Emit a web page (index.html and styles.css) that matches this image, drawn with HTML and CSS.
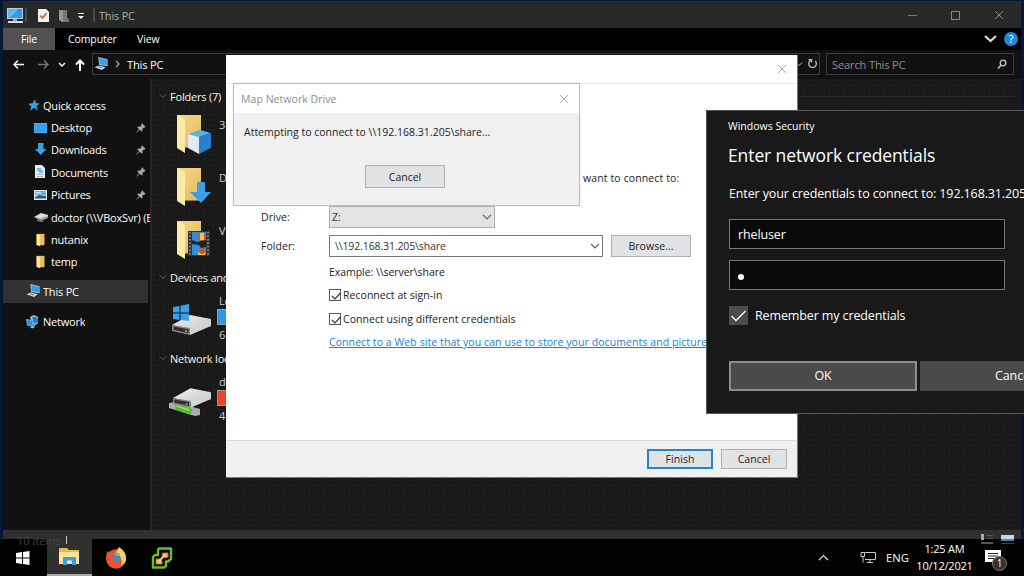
FILE: index.html
```html
<!DOCTYPE html>
<html lang="en">
<head>
<meta charset="utf-8">
<title>This PC</title>
<link rel="stylesheet" href="styles.css">
</head>
<body>
<svg class="defs" width="0" height="0">
  <defs>
    <linearGradient id="gf" x1="0" y1="0" x2="1" y2="1"><stop offset="0" stop-color="#f6d98a"/><stop offset="1" stop-color="#e3b95c"/></linearGradient>
    <linearGradient id="gd" x1="0" y1="0" x2="1" y2="1"><stop offset="0" stop-color="#f4f4f4"/><stop offset="1" stop-color="#c4c4c4"/></linearGradient>
    <symbol id="pin" viewBox="0 0 10 10"><path fill="#a8a8a8" d="M6 0.3 9.7 4 8.7 4.6 8 4.4 6.4 6 6.4 8 5.6 8.6 3.6 6.8 0.8 9.6 0.3 9.2 3 6.2 1.4 4.4 2 3.6 4 3.7 5.6 2 5.4 1.2Z"/></symbol>
    <symbol id="folder" viewBox="0 0 34 40"><path fill="url(#gf)" d="M0 1H24V33H0Z"/><path fill="#b58a3c" d="M7 33H24V33.8H7Z"/><path fill="#ffe9a8" d="M0 1 8 5V39L0 34Z"/></symbol>
    <symbol id="drive" viewBox="0 0 40 22"><path fill="url(#gd)" d="M0 11 18 1 39 5V8L18 15Z"/><path fill="#d4d4d4" d="M18 14 39 6V12L18 21Z"/><path fill="#888" d="M0 11 18 14V21L0 17Z"/><path fill="#2d2d2d" d="M1.500 12.500 16.500 15.200V19.200L1.500 15.800Z"/><path fill="#6be04b" d="M13 16.500h2v1.500h-2z"/></symbol>
    <symbol id="mini" viewBox="0 0 12 16"><path fill="#e6be62" d="M1 1H10V14H1Z"/><path fill="#ffe79c" d="M1 1 5 2.500V15L1 13.500Z"/></symbol>
    <symbol id="pc" viewBox="0 0 15 15"><path fill="#bfc7cd" d="M4 0 14 2.500V10L5 8.500Z"/><path fill="#35a0ea" d="M5 1 13.500 3V9L5.500 7.800Z"/><path fill="#d4dadf" d="M0 11 5 9 12 11 8 14Z"/><path fill="#87929a" d="M3 11 6 10 9 11.200 7 12.300Z"/></symbol>
    <symbol id="close" viewBox="0 0 10 10"><path d="M1 1 9 9M9 1 1 9" fill="none" stroke="currentColor"/></symbol>
    <symbol id="down" viewBox="0 0 10 6"><path d="M1 1 5 5 9 1" fill="none" stroke="currentColor" stroke-width="1.200"/></symbol>
    <symbol id="tick" viewBox="0 0 12 12"><path d="M2 6 5 9 10.500 3" fill="none" stroke="currentColor" stroke-width="1.200"/></symbol>
  </defs>
</svg>
<div class="desktop">

  <main class="window explorer">
    <header class="titlebar">
      <svg class="tb-pc" width="18" height="15" viewBox="0 0 18 15"><path fill="#bcd" d="M0 0H16V11H0Z"/><path fill="#2f9be6" d="M1 1H15V10H1Z"/><path fill="#5bb8f5" d="M1 1H11L3 10H1Z"/><path fill="#9aa7b0" d="M6 11H10V13H6Z"/><path fill="#d5dde2" d="M1 13H16V15H1Z"/></svg>
      <i class="rule"></i>
      <svg class="tb-check" width="11" height="13" viewBox="0 0 11 13"><path fill="#f4f4f4" d="M0 0H8L11 3V13H0Z"/><path d="M2 6.500 4.500 9 8.500 4" fill="none" stroke="#e0592b" stroke-width="1.700"/></svg>
      <svg class="tb-folder" width="10" height="13" viewBox="0 0 10 13"><path fill="#777" d="M1 1H8V9L10 10V13H2Z"/><path fill="#999" d="M0 1 4 2V13L0 11Z"/></svg>
      <svg class="tb-menu" width="8" height="7" viewBox="0 0 8 7"><path fill="#eee" d="M1 0H7V1H1ZM1 3H7L4 6Z"/></svg>
      <i class="rule rule2"></i>
      <span class="tb-title">This PC</span>
      <div class="controls">
        <svg width="9" height="10" viewBox="0 0 9 10"><path d="M0 5.500H9" stroke="#777"/></svg>
        <svg width="9" height="10" viewBox="0 0 9 10"><path d="M.5 1.500H8.500V9.500H.5Z" fill="none" stroke="#888"/></svg>
        <svg width="10" height="10"><use href="#close"/></svg>
      </div>
    </header>
    <nav class="ribbon">
      <span class="file">File</span><span class="tab computer">Computer</span><span class="tab view">View</span>
      <svg class="expand" width="13" height="8" viewBox="0 0 13 8"><path d="M1 1 6.500 6 12 1" fill="none" stroke="#ddd" stroke-width="2.200"/></svg>
      <span class="help">?</span>
    </nav>
    <div class="address">
      <svg class="arrows" width="78" height="14" viewBox="0 0 78 14" fill="none" stroke="#fff" stroke-width="1.400"><path d="M12 6.500H2M6 2.500 2 6.500 6 10.500"/><path stroke="#777" d="M26 6.500H36M32 2.500 36 6.500 32 10.500"/><path d="M47 5 50 8 53 5"/><path stroke-width="2" d="M68 13V3M64 6.500 68 2.500 72 6.500"/></svg>
      <div class="path">
        <svg width="15" height="14"><use href="#pc"/></svg>
        <svg class="crumb" width="5" height="8" viewBox="0 0 5 8"><path d="M1 1 4 4 1 7" fill="none" stroke="#aaa" stroke-width="1.200"/></svg>
        <span>This PC</span>
        <svg class="pd" width="8" height="6" viewBox="0 0 10 6"><use href="#down"/></svg>
        <svg class="reload" width="11" height="12" viewBox="0 0 11 12"><path d="M8.300 3A3.800 3.800 0 1 1 3 2.800" fill="none" stroke="#bbb" stroke-width="1.400"/><path fill="#bbb" d="M1 1H5.200V5.200L4 4Z"/></svg>
      </div>
      <div class="search"><span>Search This PC</span><svg width="10" height="11" viewBox="0 0 10 11"><circle cx="6" cy="4" r="2.800" fill="none" stroke="#ccc" stroke-width="1.300"/><path d="M4 6.300 1 9.500" stroke="#ccc" stroke-width="1.500"/></svg></div>
    </div>
    <div class="content">
      <aside class="nav">
        <div class="item root"><svg width="12" height="12" viewBox="0 0 12 12"><path fill="#379fe8" d="M7 0 7.800 4 12 4.500 8.500 7 10 11.500 6 8.800 2 12 3.300 7.500 0 4.800 4.500 4.300Z"/></svg><span>Quick access</span></div>
        <div class="item"><svg width="14" height="12" viewBox="0 0 14 12"><path fill="#5cb3ee" d="M0 1H13V11H0Z"/><path fill="#35a0ea" d="M.7 1.700H12.500V10.300H.7Z"/></svg><span>Desktop</span><svg class="pin" width="10" height="10"><use href="#pin"/></svg></div>
        <div class="item"><svg width="14" height="13" viewBox="0 0 14 13"><path fill="#3c9fe6" d="M4 0H9.500V6H12.500L6.700 12 1 6H4Z"/></svg><span>Downloads</span><svg class="pin" width="10" height="10"><use href="#pin"/></svg></div>
        <div class="item"><svg width="14" height="14" viewBox="0 0 14 14"><path fill="#e8edf0" d="M1 0H8L11 3V13H1Z"/><path fill="#6db8e8" d="M3 3H7V6H3ZM5 5h4v3H5z"/><path fill="#a8b4bc" d="M3 9H9V10H3ZM3 11H9V12H3Z"/></svg><span>Documents</span><svg class="pin" width="10" height="10"><use href="#pin"/></svg></div>
        <div class="item"><svg width="14" height="12" viewBox="0 0 14 12"><path fill="#e4e9ec" d="M0 1H13V11H0Z"/><path fill="#65b5e8" d="M1 2H12V6H1Z"/><path fill="#c9e5f5" d="M2 3H7V4.500H2Z"/><path fill="#3c5666" d="M1 8 5 6 12 7V9.500H1Z"/></svg><span>Pictures</span><svg class="pin" width="10" height="10"><use href="#pin"/></svg></div>
        <div class="item"><svg width="14" height="11" viewBox="0 0 14 11"><path fill="#ddd" d="M0 5 7 1 14 3V5L7 8Z"/><path fill="#999" d="M0 5 7 6.500 14 4V6L7 9Z"/><path fill="#6bbd45" d="M3 8 9 9V10L3 9Z"/></svg><span>doctor (\\VBoxSvr) (E:)</span></div>
        <div class="item"><svg width="14" height="14"><use href="#mini"/></svg><span>nutanix</span></div>
        <div class="item"><svg width="14" height="14"><use href="#mini"/></svg><span>temp</span></div>
        <div class="item root selected"><svg width="15" height="14"><use href="#pc"/></svg><span>This PC</span></div>
        <div class="item root network"><svg width="15" height="14" viewBox="0 0 15 14"><path fill="#a9d4ee" d="M4 2 8 0 12 2V8L8 11Z"/><path fill="#1e7fc8" d="M6 2 10 1.500 12 4V7L8 9.500Z"/><path fill="#64b7ed" d="M0 4 7 5V12L1 10.500Z"/><path fill="#2894e0" d="M1 5 6.300 6V11L1.500 9.800Z"/><path fill="#b9c5cd" d="M4 12 8 11 9 12 6 13.500Z"/></svg><span>Network</span></div>
      </aside>
      <section class="files">
        <h2 class="group g1"><svg width="8" height="6"><use href="#down"/></svg><span>Folders (7)</span></h2>
        <div class="tile"><svg width="36" height="42" viewBox="0 0 36 42"><use href="#folder" width="34" height="40"/><path fill="#dfeaf2" d="M11 20 22 23V40L11 34Z"/><path fill="#55b2f0" d="M11 20 23 16 34 19 22 23Z"/><path fill="#2680d0" d="M22 23 34 19V34L22 40Z"/></svg><span>3D</span></div>
        <div class="tile"><svg width="36" height="42" viewBox="0 0 36 42"><use href="#folder" width="34" height="40"/><path fill="#3c9fe6" d="M20 15H28V25H34L24 36 13 25H20Z"/></svg><span>D</span></div>
        <div class="tile"><svg width="36" height="42" viewBox="0 0 36 42"><use href="#folder" width="34" height="40"/><path fill="#333" d="M11 11H33V36H11Z"/><path fill="#318fd8" d="M15 12H29V22H15ZM15 24H29V35H15Z"/><path d="M13 12V35M31 12V35" stroke="#999" stroke-width="1.500" stroke-dasharray="1.500 2"/><circle cx="25" cy="17" r="4" fill="#d94f2d"/><path fill="#efc44d" d="M23 13H27V20H23ZM21 32H28V35H21Z"/><path fill="#222" d="M15 20 20 22 29 20V27L24 28 22 25 15 24Z"/><circle cx="25" cy="31" r="3" fill="#c85632"/></svg><span>V</span></div>
        <h2 class="group g2"><svg width="8" height="6"><use href="#down"/></svg><span>Devices and</span></h2>
        <div class="disk"><svg width="42" height="36" viewBox="0 0 42 36"><use href="#drive" x="1" y="11" width="40" height="22"/><path fill="#36a2ea" d="M2 4 8.500 3V9.500H2ZM9.500 2.800 18 1V9.500H9.500ZM2 10.500H8.500V17L2 16ZM9.500 10.500H18V18L9.500 17Z"/></svg><div class="info"><span>Lo</span><i class="bar"></i><span>61</span></div></div>
        <h2 class="group g3"><svg width="8" height="6"><use href="#down"/></svg><span>Network loc</span></h2>
        <div class="disk net"><svg width="44" height="36" viewBox="0 0 44 36"><path fill="#a9adaf" d="M0 19 6 18 31 25 31 31 26 32 0 24Z"/><path fill="#5cb832" d="M6 20 23 25 22 31 7 26Z"/><path fill="#8de05c" d="M7 21 20 25V27L8 23Z"/><use href="#drive" x="4" y="3" width="39" height="22"/></svg><div class="info"><span>do</span><i class="bar full"></i><span>4</span></div></div>
      </section>
      <div class="rest"></div>
    </div>
    <footer class="status"></footer>
  </main>

  <section class="window wizard">
    <header class="w-title"><svg width="10" height="10"><use href="#close"/></svg></header>
    <div class="w-body">
      <p class="w-intro">want to connect to:</p>
      <div class="field drive"><label>Drive:</label><div class="select"><span>Z:</span><svg width="10" height="6"><use href="#down"/></svg></div></div>
      <div class="field folder"><label>Folder:</label><div class="combo"><span>\\192.168.31.205\share</span><svg width="10" height="6"><use href="#down"/></svg></div><span class="btn browse">Browse...</span></div>
      <p class="example">Example: \\server\share</p>
      <div class="check"><i><svg width="12" height="12"><use href="#tick"/></svg></i><span>Reconnect at sign-in</span></div>
      <div class="check second"><i><svg width="12" height="12"><use href="#tick"/></svg></i><span>Connect using different credentials</span></div>
      <p class="link">Connect to a Web site that you can use to store your documents and pictures</p>
    </div>
    <footer class="w-foot"><span class="btn primary">Finish</span><span class="btn">Cancel</span></footer>
  </section>

  <section class="window popup">
    <header><span>Map Network Drive</span><svg width="10" height="10"><use href="#close"/></svg></header>
    <div class="p-body"><p>Attempting to connect to \\192.168.31.205\share...</p><span class="btn">Cancel</span></div>
  </section>

  <section class="window security">
    <p class="s-app">Windows Security</p>
    <h1>Enter network credentials</h1>
    <p class="s-text">Enter your credentials to connect to: 192.168.31.205</p>
    <div class="input">rheluser</div>
    <div class="input pass"><i></i></div>
    <div class="remember"><i><svg width="19" height="19" viewBox="0 0 19 19"><path d="M2.500 10 7 14.500 16.500 5" fill="none" stroke="#fff" stroke-width="1.300"/></svg></i><span>Remember my credentials</span></div>
    <div class="s-buttons"><span class="ok">OK</span><span class="cancel">Cancel</span></div>
  </section>

  <footer class="window taskbar">
    <div class="start"><svg width="14" height="14" viewBox="0 0 14 14"><path fill="#fff" d="M0 2 6 1V6.500H0ZM7 1 13.500 0V6.500H7ZM0 7.500H6V13L0 12ZM7 7.500H13.500V14L7 13Z"/></svg></div>
    <div class="task active"><svg width="21" height="18" viewBox="0 0 21 18"><path fill="#e8b84b" d="M0 0H8L10 2H20V6H0Z"/><path fill="#ffe49a" d="M0 4H20V16H0Z"/><path fill="#379fe8" d="M4 9H17V17H13V12.500H8V17H4Z"/></svg></div>
    <div class="task fox"><svg width="22" height="22" viewBox="0 0 22 22"><circle cx="11" cy="12" r="9.800" fill="#e9532d"/><path fill="#e9532d" d="M1 12 2 4 4 6 6 4 8 6 11 6V12Z"/><path fill="#f6cf5d" d="M14 0Q22 5 21 13 20 17 16 18 18 12 14 9L11 5Z"/><circle cx="11" cy="11" r="4.500" fill="#3e8dbf"/><path fill="#8fa1b0" d="M9 6 14 6 15 9 11 9Z"/><path fill="#e9532d" d="M5 9 10 11 8 14 12 16 7 18Z"/></svg></div>
    <div class="task"><svg width="22" height="22" viewBox="0 0 22 22"><path fill="#080808" stroke="#65bd32" stroke-width="2.400" stroke-linejoin="round" d="M8 1.500H20V12L17 14.500H15V19L13 20.500H2V10L4 8H7V3Z"/><path fill="#f2c063" stroke="#d85b32" d="M11.500 6H17V10L14 11 11 9ZM5 12H9L11 14V17H5Z"/><path d="M14 8 8 14" stroke="#f5ce73" stroke-width="2"/></svg></div>
    <div class="tray">
      <svg class="up" width="11" height="7" viewBox="0 0 11 7"><path d="M1 6 5.500 1.500 10 6" fill="none" stroke="#ddd" stroke-width="1.200"/></svg>
      <svg class="lan" width="17" height="13" viewBox="0 0 17 13"><path d="M5 1.500H15.500V8.500H5M10 9V11.500M7 11.500H13M1 1.500H4.500V5.500H1ZM3 6V11.500" fill="none" stroke="#ccc"/></svg>
      <span class="lang">ENG</span>
      <div class="clock"><span>1:25 AM</span><span>10/12/2021</span></div>
      <div class="notice"><svg width="17" height="15" viewBox="0 0 17 15"><path fill="#fff" d="M0 0H16V12H10L7 15V12H0Z"/><path d="M3 3.500H13M3 6H13M3 8.500H9" stroke="#222"/></svg><b>1</b></div>
    </div>
    <span class="ghost">10 items</span><i class="ghost-tick"></i>
    <svg class="views" width="34" height="12" viewBox="0 0 34 12"><path fill="#aaa" d="M0 0H3V6H0Z"/><path fill="#555" d="M5 1H12V2H5ZM5 4H12V5H5ZM0 8H12V10H0Z"/><path fill="#bde" d="M20 1H33V5H20Z"/><path fill="#48a" d="M20 5H33V7H20Z"/><path fill="#444" d="M20 9H33V10H20Z"/></svg>
  </footer>
</div>
</body>
</html>
```

FILE: styles.css
```css
* { box-sizing: border-box; }
body { margin: 0; font-family: "Open Sans", "Noto Sans", sans-serif; font-size: 11px; color: #fff; overflow: hidden; }
p, h1, h2 { margin: 0; font-weight: 400; }
i, b { font-style: normal; display: block; }
svg { display: block; flex: none; }
span, label, p { white-space: nowrap; }
.defs { position: absolute; }
.desktop { position: relative; width: 1024px; height: 576px; background: #04183a; overflow: hidden; }
.window { position: absolute; }

.explorer { left: 3px; top: 1px; width: 1018px; height: 547px; background: #191919; display: flex; flex-direction: column; letter-spacing: -.2px; }
.titlebar { height: 27px; background: #272928; display: flex; align-items: center; padding: 1px 17px 0 4px; }
.rule { width: 2px; height: 14px; background: #484848; }
.tb-check { margin-left: 11px; }
.tb-folder { margin-left: 10px; }
.tb-menu { margin-left: 8px; margin-top: 3px; }
.rule2 { margin-left: 8px; }
.tb-title { margin-left: 4px; font-size: 11px; color: #aaa; }
.controls { margin-left: auto; display: flex; gap: 34px; color: #888; align-items: center; }
.ribbon { height: 22px; background: #000; display: flex; align-items: center; font-size: 10.5px; letter-spacing: -.1px; }
.file { width: 52px; height: 22px; line-height: 22px; text-align: center; background: #515151; }
.computer { margin-left: 13px; width: 69px; }
.expand { margin-left: auto; }
.help { margin: 0 3px 0 7px; width: 14px; height: 14px; border-radius: 50%; background: #1f88d8; text-align: center; line-height: 14px; font-size: 11px; }
.address { height: 29px; background: #111; display: flex; padding: 3px 7px 0 9px; font-size: 11.2px; }
.arrows { margin-top: 5px; }
.path { margin-left: 2px; width: 728px; height: 22px; border: 1px solid #3b3b3b; display: flex; align-items: center; padding: 0 1px; }
.crumb { margin: 0 7px 0 6px; }
.pd { margin-left: auto; color: #bbb; }
.reload { margin: 0 0 0 4px; }
.search { margin-left: 6px; flex: 1; height: 22px; border: 1px solid #3b3b3b; display: flex; justify-content: space-between; align-items: center; padding: 0 6px 0 5px; color: #8d8d8d; }
.content { height: 451px; display: flex; background: #191919 radial-gradient(circle at 1px 1px, #202020 .6px, transparent 1px) 0 0 / 5px 5px; }
.nav { width: 147px; background: #111; padding-top: 15px; overflow: hidden; }
.item { height: 22.4px; display: flex; align-items: center; padding-left: 31px; gap: 3px; position: relative; font-size: 11px; }
.root { padding-left: 25px; gap: 3px; }
.item span { overflow: hidden; flex: 0 1 auto; }
.pin { margin-left: auto; margin-right: 4px; }
.selected { width: 145px; margin-top: 7px; background: #313131; padding-left: 23px; gap: 2px; }
.network { margin-top: 8px; padding-left: 23px; gap: 2px; }
.files { width: 76px; padding-left: 11px; border-left: 2px solid #252525; overflow: hidden; font-size: 11px; }
.group { display: flex; align-items: center; gap: 3px; height: 20px; font-size: 11px; color: #666; margin-left: -4px; }
.group span { color: #f4f4f4; }
.g1 { margin-top: 7px; }
.tile { display: flex; height: 53px; padding-left: 14px; gap: 6px; padding-top: 8px; color: #ccc; }
.tile span { margin-top: 3px; }
.g2 { margin-top: 2px; }
.disk { height: 61px; display: flex; gap: 6px; padding: 16px 0 0 8px; color: #ccc; }
.info { display: flex; flex-direction: column; gap: 1px; margin-top: -10px; line-height: 15px; }
.info span:last-child { margin-top: 1px; }
.bar { width: 20px; height: 16px; border: 1px solid #999; background: #2b99e8; margin-left: -2px; }
.full { background: #e8472d; }
.net { padding-left: 6px; }
.rest { flex: 1; margin: 17px 7px 0 0; border-top: 1px solid #292929; }
.status { flex: 1; background: #303030; }

.wizard { left: 226px; top: 55px; width: 572px; height: 423px; border: 1px solid #777; border-width: 0 1px 1px 0; background: #fff; color: #222; display: flex; flex-direction: column; font-size: 10.5px; letter-spacing: .04px; }
.w-title { height: 29px; border-bottom: 1px solid #ebebeb; display: flex; justify-content: flex-end; align-items: center; padding-right: 10px; color: #aaa; }
.w-body { height: 356px; padding: 87px 0 0 35px; overflow: hidden; line-height: 14px; }
.w-intro { padding-left: 322px; margin-bottom: 21px; letter-spacing: .12px; }
.field { display: flex; align-items: center; }
.field label { width: 68px; }
.drive { height: 22px; }
.select, .combo { height: 22px; border: 1px solid #adadad; background: #e2e3e4; width: 166px; padding: 0 2px; display: flex; justify-content: space-between; align-items: center; color: #333; }
.select svg, .combo svg { color: #666; }
.combo { width: 274px; background: #fff; border-color: #777; padding-left: 5px; letter-spacing: -.12px; }
.folder { height: 23px; margin-top: 6px; }
.btn { border: 1px solid #b0b0b0; background: #e1e2e3; color: #222; display: flex; align-items: center; justify-content: center; width: 66px; height: 20px; }
.browse { width: 80px; height: 22px; margin: 1px 0 0 8px; }
.example { margin: 8px 0 0 68px; letter-spacing: -.05px; }
.check { display: flex; align-items: center; gap: 2px; margin: 9px 0 0 68px; height: 14px; }
.check i { width: 12px; height: 12px; border: 1px solid #555; color: #333; display: grid; place-items: center; }
.second { margin-top: 10px; }
.link { margin: 9px 0 0 68px; color: #1582d6; text-decoration: underline; letter-spacing: .08px; }
.w-foot { flex: 1; background: #f0f0f0; border-top: 1px solid #dedede; display: flex; justify-content: flex-end; gap: 8px; padding: 8px 10px 0 0; }
.primary { border: 2px solid #1e86d4; }

.popup { left: 233px; top: 83px; width: 347px; height: 123px; border: 1px solid #bbb; background: #fff; color: #222; font-size: 10.5px; box-shadow: 0 0 1px #ccc; }
.popup header { height: 29px; display: flex; justify-content: space-between; align-items: center; padding: 0 10px 0 7px; color: #8d8d8d; letter-spacing: .05px; }
.popup header svg { color: #aaa; }
.p-body { height: 92px; background: #f0f0f0; padding: 12px 10px; line-height: 14px; display: flex; flex-direction: column; }
.p-body .btn { width: 80px; height: 23px; margin: 26px 0 0 121px; }

.security { left: 706px; top: 110px; width: 440px; height: 304px; border: 1px solid #555; background: #191919; padding: 8px 0 0 22px; font-size: 12.5px; letter-spacing: -.12px; }
.s-app { font-size: 10.5px; line-height: 15px; margin-left: -1px; letter-spacing: 0; }
.security h1 { font-size: 17.5px; line-height: 26px; margin: 8px 0 0 -1px; letter-spacing: -.1px; }
.s-text { line-height: 18px; margin-top: 17px; }
.input { width: 276px; height: 30px; margin-top: 16px; background: #0a0a0a; border: 1px solid #777; padding: 1px 8px 0; display: flex; align-items: center; }
.pass { margin-top: 11px; }
.pass i { width: 6px; height: 6px; border-radius: 50%; background: #fff; margin-top: 3px; }
.remember { display: flex; align-items: center; gap: 7px; margin-top: 16px; height: 19px; }
.remember i { width: 19px; height: 19px; background: #4c4c4c; }
.s-buttons { display: flex; gap: 3px; margin-top: 36px; }
.ok { width: 188px; height: 30px; border: 2px solid #8d8d8d; background: #4a4a4a; text-align: center; line-height: 26px; }
.cancel { width: 188px; height: 30px; background: #4a4a4a; padding-left: 75px; line-height: 30px; }

.taskbar { left: 0; top: 539px; width: 1024px; height: 37px; background: #020202; display: flex; }
.start { width: 47px; display: grid; place-items: center; padding-right: 2px; }
.task { width: 46px; display: grid; place-items: center; }
.active { width: 45px; background: #303030; border-bottom: 2px solid #aaa; }
.fox { margin-left: 1px; }
.tray { margin-left: auto; display: flex; align-items: center; width: 206px; }
.up { margin-right: 31px; }
.lan { margin-right: 9px; }
.lang { width: 28px; font-size: 11.2px; }
.clock { width: 61px; display: flex; flex-direction: column; align-items: center; line-height: 17px; font-size: 11px; letter-spacing: -.2px; margin-top: -1px; }
.notice { position: relative; margin-left: 10px; }
.notice b { position: absolute; left: 7px; top: 6px; width: 15px; height: 15px; border: 1px solid #777; border-radius: 50%; background: #333; font-size: 10px; font-weight: 400; text-align: center; line-height: 13px; }
.ghost { position: absolute; left: 17px; top: -6px; color: #434343; font-size: 11px; }
.ghost-tick { position: absolute; left: 66px; top: -3px; width: 1px; height: 8px; background: #ccc; }
.views { position: absolute; left: 981px; top: -5px; }
```
